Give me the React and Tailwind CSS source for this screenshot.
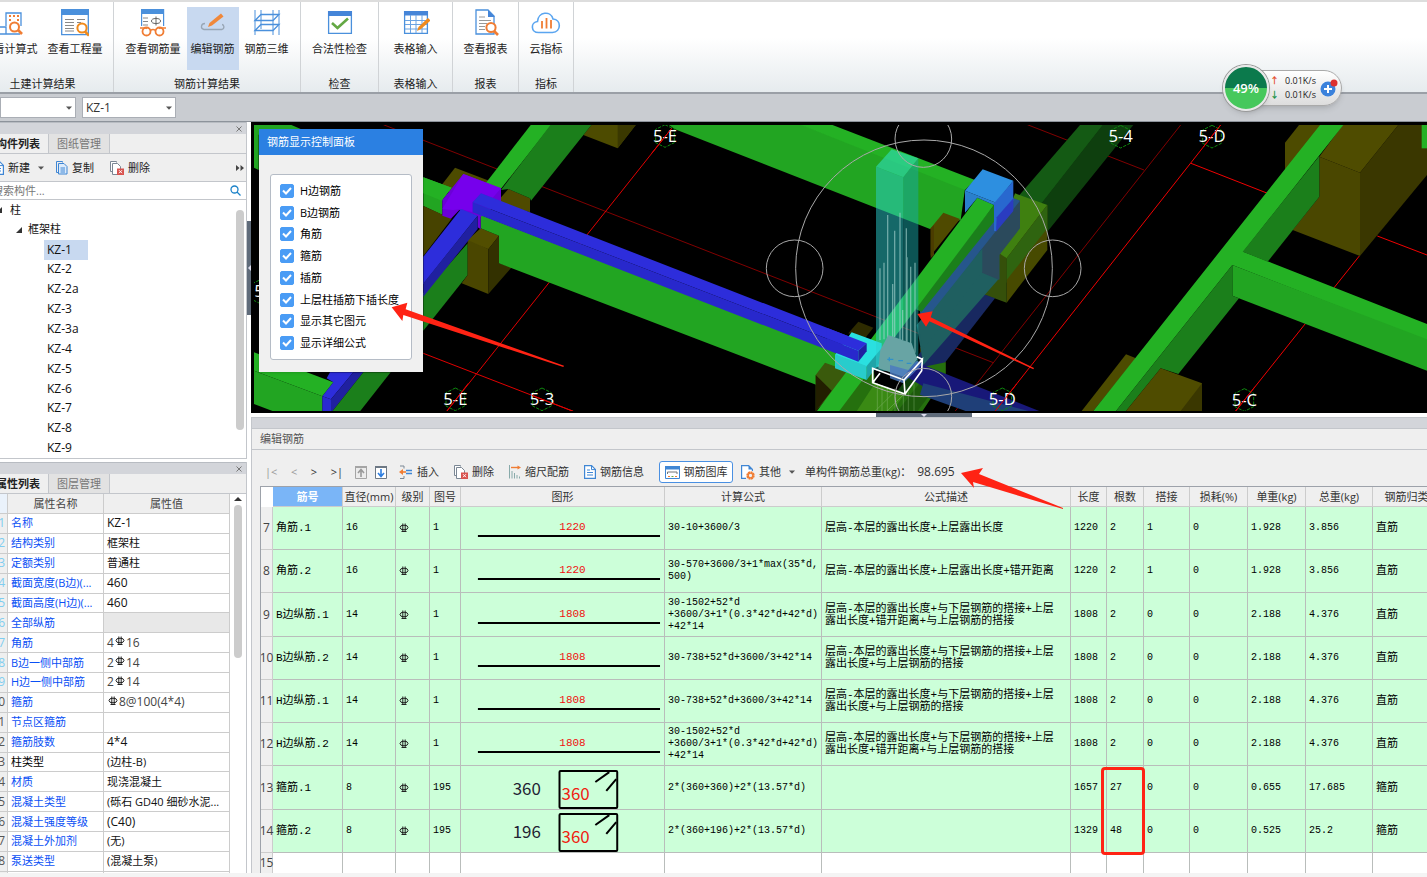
import { useState } from "react";

const TREE = ["KZ-1", "KZ-2", "KZ-2a", "KZ-3", "KZ-3a", "KZ-4", "KZ-5", "KZ-6", "KZ-7", "KZ-8", "KZ-9"];

const PROPS = [
  { name: "名称", value: "KZ-1" },
  { name: "结构类别", value: "框架柱" },
  { name: "定额类别", value: "普通柱" },
  { name: "截面宽度(B边)(...", value: "460" },
  { name: "截面高度(H边)(...", value: "460" },
  { name: "全部纵筋", value: "", disabled: true },
  { name: "角筋", before: "4", rebar: true, value: "16" },
  { name: "B边一侧中部筋", before: "2", rebar: true, value: "14" },
  { name: "H边一侧中部筋", before: "2", rebar: true, value: "14" },
  { name: "箍筋", rebar: true, value: "8@100(4*4)" },
  { name: "节点区箍筋", value: "" },
  { name: "箍筋肢数", value: "4*4" },
  { name: "柱类型", value: "(边柱-B)", plain: true },
  { name: "材质", value: "现浇混凝土" },
  { name: "混凝土类型", value: "(砾石 GD40 细砂水泥..." },
  { name: "混凝土强度等级", value: "(C40)" },
  { name: "混凝土外加剂", value: "(无)" },
  { name: "泵送类型", value: "(混凝土泵)" },
];

const DISPLAY_OPTIONS = ["H边钢筋", "B边钢筋", "角筋", "箍筋", "插筋", "上层柱插筋下插长度", "显示其它图元", "显示详细公式"];

const DESC_A = "层高-本层的露出长度+与下层钢筋的搭接+上层\n露出长度+错开距离+与上层钢筋的搭接";
const DESC_B = "层高-本层的露出长度+与下层钢筋的搭接+上层\n露出长度+与上层钢筋的搭接";
const FORMULA_A = "30-1502+52*d\n+3600/3+1*(0.3*42*d+42*d)\n+42*14";
const FORMULA_B = "30-738+52*d+3600/3+42*14";

const BARS = [
  { no: 7, name: "角筋.1", dia: 16, code: 1, line: "1220", formula: "30-10+3600/3", desc: "层高-本层的露出长度+上层露出长度", rest: ["1220", "2", "1", "0", "1.928", "3.856"], kind: "直筋" },
  { no: 8, name: "角筋.2", dia: 16, code: 1, line: "1220", formula: "30-570+3600/3+1*max(35*d,\n500)", desc: "层高-本层的露出长度+上层露出长度+错开距离", rest: ["1220", "2", "1", "0", "1.928", "3.856"], kind: "直筋" },
  { no: 9, name: "B边纵筋.1", dia: 14, code: 1, line: "1808", formula: FORMULA_A, desc: DESC_A, rest: ["1808", "2", "0", "0", "2.188", "4.376"], kind: "直筋" },
  { no: 10, name: "B边纵筋.2", dia: 14, code: 1, line: "1808", formula: FORMULA_B, desc: DESC_B, rest: ["1808", "2", "0", "0", "2.188", "4.376"], kind: "直筋" },
  { no: 11, name: "H边纵筋.1", dia: 14, code: 1, line: "1808", formula: FORMULA_B, desc: DESC_B, rest: ["1808", "2", "0", "0", "2.188", "4.376"], kind: "直筋" },
  { no: 12, name: "H边纵筋.2", dia: 14, code: 1, line: "1808", formula: FORMULA_A, desc: DESC_A, rest: ["1808", "2", "0", "0", "2.188", "4.376"], kind: "直筋" },
  { no: 13, name: "箍筋.1", dia: 8, code: 195, stirrup: "360", formula: "2*(360+360)+2*(13.57*d)", desc: "", rest: ["1657", "27", "0", "0", "0.655", "17.685"], kind: "箍筋" },
  { no: 14, name: "箍筋.2", dia: 8, code: 195, stirrup: "196", formula: "2*(360+196)+2*(13.57*d)", desc: "", rest: ["1329", "48", "0", "0", "0.525", "25.2"], kind: "箍筋" },
];

const COLUMNS = ["直径(mm)", "级别", "图号", "图形", "计算公式", "公式描述", "长度", "根数", "搭接", "损耗(%)", "单重(kg)", "总重(kg)", "钢筋归类"];

/* ---------- icons ---------- */

const RebarMark = ({ className }) => (
  <svg className={className} width="10" height="10" viewBox="0 0 10 10" fill="none" stroke="#222">
    <ellipse cx="5" cy="4.500" rx="4" ry="2.300" />
    <path d="M3.800 .5v8M6.200 .5v8M2.500 8.500h5" />
  </svg>
);

const Caret = ({ className }) => (
  <svg className={className} width="6" height="4" viewBox="0 0 6 4">
    <path d="M0 .5h6L3 3.8z" fill="#555" />
  </svg>
);

const CalcFormulaIcon = () => (
  <svg width="28" height="28" viewBox="0 0 28 28" fill="none">
    <path d="M10 17V4h15v13M0 18h10v7M0 25h24" stroke="#4a90dc" strokeWidth="1.3" />
    <path d="M13 7h2M17 7h2M21 7h2M13 11h2M21 11h2" stroke="#f07d34" strokeWidth="2" />
    <circle cx="18.500" cy="18" r="4.500" fill="#fff" stroke="#f07d34" strokeWidth="2" />
    <path d="m22 21 4 4" stroke="#f07d34" strokeWidth="2.600" />
  </svg>
);

const QuantityIcon = () => (
  <svg width="28" height="28" viewBox="0 0 28 28" fill="none">
    <path d="M.7.7h26.600v25H.7z" fill="#fff" stroke="#4a90dc" strokeWidth="1.300" />
    <path d="M0 0h28v6H0z" fill="#4a90dc" />
    <path d="M4 10.500h9M4 13.500h9M4 16.500h9M4 19.500h9M4 22h9M16 10.500h8M16 13.500h4" stroke="#888" />
    <circle cx="21" cy="19" r="4.600" fill="#fff" stroke="#f08a1c" strokeWidth="2" />
    <path d="m24 22.500 4 4" stroke="#f08a1c" strokeWidth="2.600" />
  </svg>
);

const RebarQuantityIcon = () => (
  <svg width="28" height="28" viewBox="0 0 28 28" fill="none">
    <path d="M2.600 17V.6h22v16.500" fill="#fff" stroke="#4a90dc" strokeWidth="1.200" />
    <path d="M2 0h23v5H2z" fill="#4a90dc" />
    <path d="M4 9h5M4 12.500h5M4 16h5" stroke="#888" />
    <ellipse cx="17" cy="12" rx="4.500" ry="2.500" stroke="#666" />
    <path d="M17 7.500v9" stroke="#666" />
    <path d="M1 19h6l1 .5M27 19h-6l-1 .5" stroke="#f07d34" strokeWidth="1.500" />
    <circle cx="7.500" cy="22.500" r="4" stroke="#f07d34" strokeWidth="1.800" />
    <circle cx="20.500" cy="22.500" r="4" stroke="#f07d34" strokeWidth="1.800" />
    <path d="M11.500 21.500q2.500-2 5 0" stroke="#f07d34" strokeWidth="1.500" />
  </svg>
);

const EditRebarIcon = () => (
  <svg width="28" height="28" viewBox="0 0 28 28" fill="none">
    <path d="M6 14.500c-4 0-5 5-1 6h18c3-1 2-5 0-5" stroke="#98a6b5" strokeWidth="1.300" />
    <path d="m9 18 1.500-4L22 4.500l2.500 3L13 16.500z" fill="#f0883a" />
  </svg>
);

const Rebar3dIcon = () => (
  <svg width="28" height="28" viewBox="0 0 28 28" fill="none" stroke="#4a90dc">
    <path d="M2 1v25M8 1v19M20 1v25M26 1v25" />
    <path d="M2 11.500h18l6-6H8zM2 21.500h18l6-6H8z" strokeWidth="1.300" />
  </svg>
);

const LegalCheckIcon = () => (
  <svg width="28" height="28" viewBox="0 0 28 28" fill="none">
    <path d="M2.600 2.600h22.800v21.800H2.600z" fill="#fff" stroke="#4a90dc" strokeWidth="1.300" />
    <path d="M2 2h24v5H2z" fill="#4585d8" />
    <path d="m6 14 5.500 5L22 9.500" stroke="#64a844" strokeWidth="2.600" />
  </svg>
);

const TableInputIcon = () => (
  <svg width="28" height="28" viewBox="0 0 28 28" fill="none">
    <path d="M2.600 2.600h22.800v21.800H2.600z" fill="#fff" stroke="#4a90dc" strokeWidth="1.300" />
    <path d="M2 2h24v4.500H2z" fill="#4585d8" />
    <path d="M3 11.500h22M3 15.500h22M3 20h22M8.500 6v18M14 6v18M20 6v18" stroke="#6ba3e2" />
    <path d="m15 22 1.500-4L26 9l2.500 2.500L19 20z" fill="#f08a1c" />
  </svg>
);

const ReportIcon = () => (
  <svg width="28" height="28" viewBox="0 0 28 28" fill="none">
    <path d="M4 1h12l6 6v18H4z" fill="#fff" stroke="#4a90dc" strokeWidth="1.300" />
    <path d="M16 1v7h7z" fill="#4585d8" />
    <path d="M7 8h6M7 11.500h12M7 14.500h8M7 17.500h6M7 20.500h6" stroke="#999" />
    <circle cx="19" cy="18.500" r="4.600" fill="#fff" stroke="#f07d34" strokeWidth="2" />
    <path d="m22 22 4 4" stroke="#f07d34" strokeWidth="2.600" />
  </svg>
);

const CloudIcon = () => (
  <svg width="30" height="28" viewBox="0 0 30 28" fill="none">
    <path d="M7.500 23.500c-8 0-8-10.500-1-11C7 2.500 20 1.500 22 10c8.500.5 8.500 13-.5 13.500z" stroke="#5aa5f0" strokeWidth="1.600" />
    <path d="M11 12v7.500M15.500 9v10.500M20 11v8.500" stroke="#f07d34" strokeWidth="1.800" />
  </svg>
);

const PageIcon = () => (
  <svg width="12" height="14" viewBox="0 0 12 14" fill="none">
    <path d="M.6.600h7l3.800 3.800v9H.6z" fill="#fff" stroke="#3f86d4" strokeWidth="1.200" />
    <path d="M7.500.6v4h4M3 5h3M3 7.500h6M3 10h6" stroke="#3f86d4" />
  </svg>
);

const CopyIcon = () => (
  <svg width="12" height="14" viewBox="0 0 12 14" fill="none" stroke="#3f86d4">
    <path d="M2.500 11.500h-2V.5h6v1" />
    <path d="M2.500 2.500h5.500l3 3v7.500h-8.500z" fill="#dcebfb" />
    <path d="M4.500 7h4.500M4.500 9h4.500M4.500 11h4.500" />
  </svg>
);

const DeleteIcon = () => (
  <svg width="14" height="14" viewBox="0 0 14 14" fill="none">
    <path d="M2.500 10.500h-2V.5h6v1M2.500 2.500h5l3 3v8h-8z" fill="#fff" stroke="#7b8794" />
    <path d="M7 7.500h7v6.500H7z" fill="#d9534f" />
    <path d="m9 9.200 3 3M12 9.200l-3 3" stroke="#fff" />
  </svg>
);

const InsertIcon = () => (
  <svg width="14" height="14" viewBox="0 0 14 14" fill="none">
    <path d="M1 1h4v2.500M1 13.500h4V11" stroke="#7b8794" />
    <path d="M7 5.500h6M7 8.500h6" stroke="#3f86d4" strokeWidth="1.400" />
    <path d="M7 7H2" stroke="#f07d34" strokeWidth="1.600" />
    <path d="M0 7l4-3v6z" fill="#f07d34" />
  </svg>
);

const ScaleIcon = () => (
  <svg width="12" height="14" viewBox="0 0 12 14" fill="none">
    <path d="M.5 0v13.500M3 6v7.500M5.500 8v5.500M8 10v3.500M10.500 11.500v2" stroke="#8aa" />
    <path d="M2 2.500h8" stroke="#f07d34" strokeWidth="1.400" />
    <path d="M8.500 .5l3.500 2-3.500 2z" fill="#f07d34" />
  </svg>
);

const LibraryIcon = () => (
  <svg width="15" height="13" viewBox="0 0 15 13" fill="none">
    <path d="M.5.500h14v12H.5z" fill="#fff" stroke="#3f86d4" />
    <path d="M0 0h15v3.500H0z" fill="#3f86d4" />
    <path d="M2.500 8V6h9.500v2" stroke="#777" />
    <path d="M3 10.500h2M10 10.500h2" stroke="#f07d34" />
    <path d="M6.500 10.500h2" stroke="#64a844" />
  </svg>
);

const OtherIcon = () => (
  <svg width="14" height="15" viewBox="0 0 14 15" fill="none">
    <path d="M5 13.400H.6V.6h7l3.800 3.800V6" fill="#fff" stroke="#3f86d4" strokeWidth="1.200" />
    <path d="M7.500 0v4.500H12z" fill="#3f86d4" />
    <circle cx="9.500" cy="10.500" r="3" stroke="#f07d34" strokeWidth="2.400" strokeDasharray="1.800 .5" />
    <circle cx="9.500" cy="10.500" r="2.400" stroke="#f07d34" strokeWidth="1.400" />
  </svg>
);

const BoxArrowIcon = ({ down }) => (
  <svg width="12" height="13" viewBox="0 0 12 13" fill="none">
    <path d="M.5.500h11v12H.5z" fill={down ? "#fff" : "#ececec"} stroke={down ? "#6d7884" : "#a5a5a5"} />
    <path d="M0 0h12v2H0z" fill={down ? "#6d7884" : "#a5a5a5"} />
    <path d={down ? "M6 3v7M3 7l3 3.500L9 7" : "M6 11V4M3 7l3-3.500L9 7"} stroke={down ? "#2b7de0" : "#999"} strokeWidth="1.600" />
  </svg>
);

/* ---------- ribbon ---------- */

const RibbonButton = ({ icon, label, active }) => (
  <button
    type="button"
    className={`flex h-[63px] shrink-0 flex-col items-center gap-1 px-1 pt-[2px] whitespace-nowrap ${active ? "bg-[#c8d9f0]" : ""}`}
  >
    <span className="flex h-7 items-center">{icon}</span>
    <span className="leading-4">{label}</span>
  </button>
);

const RibbonGroup = ({ title, className, children }) => (
  <div className={`flex shrink-0 flex-col border-r border-[#d0d3d6] pt-[7px] ${className}`}>
    <div className="flex justify-center gap-[2px]">{children}</div>
    <div className="mt-[6px] text-center leading-4">{title}</div>
  </div>
);

const Ribbon = () => (
  <header className="flex h-[94px] shrink-0 overflow-hidden border-t-2 border-b-2 border-t-[#dddddd] border-b-[#9a9fa6] bg-gradient-to-b from-white from-40% to-[#e6ebee]">
    <div className="-mt-[2px] flex">
      <RibbonGroup title="土建计算结果" className="-ml-[28px] w-[142px]">
        <RibbonButton icon={<CalcFormulaIcon />} label="查看计算式" />
        <RibbonButton icon={<QuantityIcon />} label="查看工程量" />
      </RibbonGroup>
      <RibbonGroup title="钢筋计算结果" className="w-[187px]">
        <RibbonButton icon={<RebarQuantityIcon />} label="查看钢筋量" />
        <RibbonButton icon={<EditRebarIcon />} label="编辑钢筋" active />
        <RibbonButton icon={<Rebar3dIcon />} label="钢筋三维" />
      </RibbonGroup>
      <RibbonGroup title="检查" className="w-[78px]">
        <RibbonButton icon={<LegalCheckIcon />} label="合法性检查" />
      </RibbonGroup>
      <RibbonGroup title="表格输入" className="w-[74px]">
        <RibbonButton icon={<TableInputIcon />} label="表格输入" />
      </RibbonGroup>
      <RibbonGroup title="报表" className="w-[66px]">
        <RibbonButton icon={<ReportIcon />} label="查看报表" />
      </RibbonGroup>
      <RibbonGroup title="指标" className="w-[55px]">
        <RibbonButton icon={<CloudIcon />} label="云指标" />
      </RibbonGroup>
    </div>
  </header>
);

const SpeedBall = () => (
  <div className="absolute top-[65px] right-[85px] z-20 flex items-center">
    <div className="z-10 -mr-6 grid size-[46px] place-items-center rounded-full border-2 border-[#e8e8e8] bg-gradient-to-b from-[#0b7a4c] from-50% to-[#46c85c] to-50% text-[13px] font-semibold text-white shadow-md ring-1 ring-[#999]">
      49%
    </div>
    <div className="flex h-9 w-[97px] items-center rounded-r-full border border-[#aaa] bg-gradient-to-b from-white to-[#dddddd] pl-6 shadow-md">
      <div className="text-[9px] leading-[14px] whitespace-nowrap text-[#222]">
        <div className="flex gap-[6px]"><span className="font-bold text-[#e4502e]">↑</span>0.01K/s</div>
        <div className="flex gap-[6px]"><span className="font-bold text-[#1b9448]">↓</span>0.01K/s</div>
      </div>
      <svg className="ml-1 shrink-0" width="18" height="18" viewBox="0 0 18 18">
        <circle cx="8" cy="10" r="7.500" fill="#3b82dc" />
        <path d="M8 6v8M4 10h8" stroke="#fff" strokeWidth="2" />
        <circle cx="14" cy="4" r="3.500" fill="#dc3030" />
      </svg>
    </div>
  </div>
);

/* ---------- left side ---------- */

const PanelTabs = ({ active, other }) => (
  <>
    <div className="flex h-3 shrink-0 items-center justify-end border-t border-[#b8bcc2] bg-[#d3d5da]">
      <button type="button" aria-label="关闭" className="p-1">
        <svg width="6" height="6" viewBox="0 0 6 6" stroke="#777"><path d="m.5.500 5 5M5.500.500l-5 5" /></svg>
      </button>
    </div>
    <div className="flex h-5 shrink-0 border-b border-[#c3c6cb] bg-[#efefef] leading-5">
      <button type="button" className="w-[61px] border-r border-[#c3c6cb] font-bold text-[#222]">{active}</button>
      <button type="button" className="w-[61px] border-r border-[#c3c6cb] bg-[#e2e2e2] text-[#777]">{other}</button>
    </div>
  </>
);

const ComponentPanel = () => (
  <section className="flex h-[337px] shrink-0 flex-col border-r border-b border-[#c3c6cb] bg-white">
    <PanelTabs active="构件列表" other="图纸管理" />
    <div className="flex h-7 shrink-0 items-center border-b border-[#c3c6cb] bg-[#efefef] pl-1">
      <button type="button" className="flex items-center gap-1"><PageIcon />新建</button>
      <Caret className="ml-2" />
      <button type="button" className="ml-3 flex items-center gap-1"><CopyIcon />复制</button>
      <button type="button" className="ml-4 flex items-center gap-1"><DeleteIcon />删除</button>
      <svg className="mr-[2px] ml-auto" width="8" height="6" viewBox="0 0 8 6"><path d="M0 0l3.500 3L0 6zM4.500 0L8 3 4.500 6z" fill="#444" /></svg>
    </div>
    <div className="flex h-[18px] shrink-0 items-center border-b border-[#c3c6cb] pr-[5px] pl-1">
      <input aria-label="搜索构件" placeholder="搜索构件..." className="min-w-0 flex-1 leading-4 outline-none placeholder:text-[#777]" />
      <svg width="11" height="11" viewBox="0 0 11 11" fill="none" stroke="#1b82c8" strokeWidth="1.300">
        <circle cx="4.500" cy="4.500" r="3.500" /><path d="m7 7 3.500 3.500" />
      </svg>
    </div>
    <div className="flex min-h-0 flex-1">
      <ul className="flex flex-1 flex-col text-xs text-[#111]">
        <li className="flex flex-1 items-center gap-2 pl-2 text-[11px]"><TreeMark />柱</li>
        <li className="flex flex-1 items-center gap-[6px] pl-7 text-[11px]"><TreeMark />框架柱</li>
        {TREE.map((name, i) => (
          <li key={name} className="flex flex-1 pl-14">
            <span className={`flex w-11 items-center pl-[3px] ${i === 0 ? "bg-[#c8d9f0]" : ""}`}>{name}</span>
          </li>
        ))}
      </ul>
      <div className="mt-[10px] mr-[2px] h-[220px] w-2 rounded-full bg-[#cccccc]" />
    </div>
  </section>
);

const TreeMark = () => (
  <svg width="6" height="6" viewBox="0 0 6 6"><path d="M6 0v6H0z" fill="#333" /></svg>
);

// latin-only values are set one step larger than the Chinese ones
const isLatin = (text) => /^[\x20-\x7e]+$/.test(text);

const PropertyPanel = () => (
  <section className="mt-[3px] flex min-h-0 flex-1 flex-col border-r border-[#c3c6cb] bg-white">
    <PanelTabs active="属性列表" other="图层管理" />
    <div className="flex min-h-0 flex-1 overflow-hidden">
      <table className="h-full min-w-0 flex-1 table-fixed border-separate border-spacing-0">
        <colgroup>
          <col className="w-5" />
          <col className="w-24" />
          <col />
        </colgroup>
        <thead>
          <tr className="h-5 bg-[#efefef] text-[#444]">
            <th className="border-r border-b border-[#ccc] bg-[#eaf2fb]" />
            <th className="border-r border-b border-[#ccc] py-0 leading-4 font-normal">属性名称</th>
            <th className="border-r border-b border-[#ccc] py-0 leading-4 font-normal">属性值</th>
          </tr>
        </thead>
        <tbody>
          {PROPS.map((p, i) => (
            <tr key={p.name} className="h-[19px]">
              <td className={`border-r border-b border-[#ccc] bg-[#efefef] p-0 pr-[2px] text-right text-xs leading-4 ${i < 9 ? "text-[#7fcdf0]" : "text-[#555]"}`}>{i + 1}</td>
              <td className={`truncate border-r border-b border-[#ccc] p-0 pl-[3px] leading-4 ${p.plain ? "text-black" : "text-[#0a50f5]"}`}>{p.name}</td>
              <td className={`truncate border-r border-b border-[#ccc] p-0 pl-[3px] leading-4 ${isLatin(p.value) ? "text-xs" : "text-[11px]"} ${p.disabled ? "bg-[#e8e8e8]" : ""} ${p.rebar ? "text-[#444]" : "text-[#111]"}`}>
                {p.before}
                {p.rebar && <RebarMark className="mx-px mb-1 inline-block" />}
                {p.value}
              </td>
            </tr>
          ))}
          <tr className="h-px">
            <td className="border-r border-[#ccc] bg-[#efefef] p-0" />
            <td className="border-r border-[#ccc] p-0" />
            <td className="border-r border-[#ccc] p-0" />
          </tr>
        </tbody>
      </table>
      <div className="flex w-4 flex-col items-center gap-1 pt-[3px]">
        <svg width="8" height="4" viewBox="0 0 8 4"><path d="M4 0l4 4H0z" fill="#333" /></svg>
        <div className="h-[153px] w-2 rounded-full bg-[#cccccc]" />
      </div>
    </div>
  </section>
);

/* ---------- 3d view ---------- */

const AxisLabel = ({ x, y, children }) => (
  <g>
    <path d={`M${x} ${y - 34}l28 14v40l-28 14l-28 -14v-40z`} fill="none" stroke="#0f8a0f" strokeWidth="3" strokeDasharray="10 4" />
    <text x={x} y={y + 17} textAnchor="middle" fontSize="50" fill="#fff">{children}</text>
  </g>
);

const Scene = () => (
  <svg className="absolute inset-0 size-full" viewBox="0 0 3528 873" preserveAspectRatio="xMinYMin slice">
    <defs>
      <clipPath id="scene"><rect x="9" y="9" width="3519" height="858" /></clipPath>
    </defs>
    <g clipPath="url(#scene)">
      {/* west bay */}
      <g transform="translate(-18 -6)">
        <path d="M415 14 2245 728" stroke="#800000" strokeWidth="3" />
        <path d="M1280 25 605 874M535 700l450 174" stroke="#e00000" strokeWidth="3" />
        <path d="M1015 45l25-31h133l-55 71z" fill="#4d4b00" />
        <path d="M1118 14h55l-55 71z" fill="#3a3800" />
        <path d="M590 195l40-52 110 42-80 75z" fill="#4d4b00" />
        <path d="M790 207l65 28v42l-100-30z" fill="#4f4a00" />
        <path d="M858 14h62L765 210l-42-22z" fill="#24b124" />
        <path d="M917 14h123L858 242l-3-7-65-28-22 3z" fill="#1b7f1b" />
        <path d="M535 172l85 31-28 37v45l28 13-85-40z" fill="#22a522" />
        <path d="M535 172l85 31-28 37v3l-57-23z" fill="#24b124" />
        <path d="M535 258l85 38-85 112z" fill="#474300" />
        <path d="M668 370v95L535 632V520z" fill="#1b7f1b" />
        <path d="M668 355l62 33v134l-80-32 18-25z" fill="#4a4600" />
        <path d="M707 325l55 22-32 41-62-28z" fill="#524e00" />
        <path d="M730 388l32-41v83l38 12-70 80z" fill="#333100" />
        <path d="M707 285l1078 415 0 105-25 7L762 430v-83l-55-22z" fill="#22a522" />
        <path d="M655 162l113 43v40l-61 45v38l-9-6v-33l-55-19-25 26-26-9v-47z" fill="#6b00d8" />
        <path d="M655 162l113 43-25 28-35-13-25 27v30l-35-10-24 3-32-3z" fill="#7600ec" />
        <path d="M648 267l50 20-163 205v-82z" fill="#2d2ddb" />
        <path d="M698 287v40L535 530v-40z" fill="#2020a0" />
        <path d="M708 220l1157 450-25 22L683 247z" fill="#2d2ddb" />
        <path d="M683 247l1157 445v34L683 277z" fill="#2828cc" />
        <path d="M27 14h110l70 30H41v106l-14-7z" fill="#22a522" />
        <path d="M27 697l238 90-33 42-205-77z" fill="#24b124" />
        <path d="M27 752l205 77v45H85l-58-22z" fill="#22a522" />
        <path d="M255 757h70l-67 81-26-9 33-42-20-12z" fill="#2d2ddb" />
        <path d="M232 829l26 9v36h-26z" fill="#2a2ad0" />
        <path d="M325 757h30l-93 117h-4v-36z" fill="#2020a0" />
        <path d="M355 757h82l-92 117h-83z" fill="#1b7f1b" />
        <AxisLabel x={631} y={838}>5-E</AxisLabel>
        <AxisLabel x={891} y={838}>5-3</AxisLabel>
        <AxisLabel x={42} y={515}>5</AxisLabel>
        <path d="M670 790l-65 84M860 826l125 48" stroke="#e00000" strokeWidth="3" />
      </g>

      {/* middle bay */}
      <g transform="translate(1167 -6)">
        <path d="M1622 15 945 874M1162 14l350 136" stroke="#800000" strokeWidth="3" />
        <path d="M1742 15 1065 874" stroke="#f00000" strokeWidth="3" />
        <path d="M1320 15h70L1205 252l-75-17z" fill="#145a14" />
        <path d="M1388 15h92L1222 335 850 800l-50 74-60-20 465-605z" fill="#0e3f0e" />
        <path d="M1125 220l97 35-122 160-40-15z" fill="#3f8010" />
        <path d="M1100 415l122-160v135L1100 548z" fill="#474a00" />
        <path d="M1100 415l122-160v70L1100 480z" fill="#2f6410" />
        <path d="M1010 515l68-115 22 15v133z" fill="#35500a" />
        <path d="M85 14h400l490 192-13 94-92 27L105 28z" fill="#22a522" />
        <path d="M480 14h95l430 166-30 30z" fill="#24b124" />
        <path d="M910 278l50 19-88 110v-82z" fill="#4f4a00" />
        <path d="M872 325l10-10v90l-10 10z" fill="#4a3c00" />
        <path d="M655 605l45 18-25 32-50-15z" fill="#2e2b00" />
        <path d="M840 680l77 27v55l-80-20z" fill="#33330a" />
        <path d="M990 508l75 27-210 270-20-100z" fill="#182860" />
        <path d="M1027 385l51 15v75L850 735l-20-120z" fill="#1f5f60" />
        <path d="M1068 320l52-85 20 7v83l-62 80v75l-52-22v-73l-181 230-10-80z" fill="#2b4a5c" />
        <path d="M1027 385v70L848 690l-13-80z" fill="#1f5f60" />
        <path d="M1062 300l58-65 20 7L848 610l-13-60z" fill="#26568c" />
        <path d="M1062 255v50L845 575l-25-10z" fill="#1b7f1b" />
        <path d="M555 728l60 22 25-10-65 80-48 54V765z" fill="#3a5a0c" />
        <path d="M527 765l48 47-48 62z" fill="#221f00" />
        <path d="M590 874l110-140 5 55 90 33 50-80 72-15v40l-70 107z" fill="#25700e" />
        <path d="M650 874l55-85 90 33-40 52z" fill="#3a8a14" />
        <path d="M870 750l47 12-85 112h-60z" fill="#1d5a0c" />
        <path d="M1012 233l50 22-465 619h-67z" fill="#24b124" />
        <path d="M975 212l93 36-6 7-50-22-37 45z" fill="#2a80cc" />
        <path d="M1028 148l92 34-52 66-93-36z" fill="#2d8fe0" />
        <path d="M1062 250l58-68v60l-52 92-6-2z" fill="#2868cf" />
        <path d="M1070 292l50-57v38l-52 62z" fill="#2a3cc0" />
        <path d="M825 725l375 149h-220L790 765z" fill="#181878" />
        <path d="M850 790l320 84H980l-140-50z" fill="#1f3f78" />
        <path d="M635 637l90 33v70l-45 0-95-35z" fill="#2ae0e0" />
        <path d="M585 703l95 35v42l-95-35z" fill="#28cccc" />
        <path d="M680 738l42-50v37l-42 55z" fill="#1fa4a8" />
        <path d="M560 623l120 47-25 22-95-37z" fill="#2d2ddb" />
        <path d="M560 655l95 37v33l-95-37z" fill="#2828cc" />
        <path d="M655 692l25-22v24l-25 31z" fill="#2020a0" />
        {/* selected column */}
        <path d="M755 88l80 27-45 57-82-32z" fill="#30e0c0" opacity=".6" />
        <path d="M708 140l82 32v580h-82z" fill="#2ad0d0" opacity=".5" />
        <path d="M790 172l45-57v610l-45 40z" fill="#18a8a8" opacity=".5" />
        <path d="M720 445v215M732 428v230M743 285v370M758 492v160M764 332v320M780 278v390M788 570v90M799 325v350M801 412v260M812 440v240M825 428v270" stroke="#a8d4d0" strokeWidth="4" opacity=".6" />
        <path d="M745 645l70 25 17 48-42 52-75-25 6-55z" fill="#68a4a4" />
        <path d="M750 735l55 15 25-28 20 8-60 60-40-15z" fill="#4a78c0" opacity=".8" />
        <path d="M712 790v84M726 795v79M742 800v74M765 805v69M790 820v54M805 815v59M822 790v84M705 874l60-60M740 874l80-80" stroke="#a0c890" strokeWidth="2" opacity=".5" />
        <path d="M698 745l94 35 3 42-97-34zM792 780l55-62-2 34-50 70M830 710l17 8M698 788l22-28" fill="none" stroke="#fff" strokeWidth="5" />
        <path d="M742 718h18M748 712v12M775 722h14M800 730h14" stroke="#3090c8" strokeWidth="4" />
        {/* orbit gizmo */}
        <g fill="none" stroke="#a9a9a9" strokeWidth="3">
          <circle cx="852" cy="445" r="385" />
          <circle cx="850" cy="57" r="85" />
          <circle cx="464" cy="445" r="85" />
          <circle cx="850" cy="830" r="85" />
          <circle cx="1238" cy="445" r="85" />
        </g>
        <AxisLabel x={75} y={48}>5-E</AxisLabel>
        <AxisLabel x={1087} y={838}>5-D</AxisLabel>
        <path d="M95 25 35 100M1130 792l-65 82" stroke="#e00000" strokeWidth="3" />
      </g>

      {/* east bay */}
      <g transform="translate(2337 -216)">
        <path d="M483 340l240 94M1042 558l149 57M988 618 617 1083" stroke="#f00000" strokeWidth="3" />
        <path d="M765 278l42-53h68L765 365z" fill="#4d4b00" />
        <path d="M938 225h167L990 368l-122-48z" fill="#4f4c00" />
        <path d="M868 320l122 48v250l-202-78 80-100z" fill="#4a4700" />
        <path d="M990 368l115-143h86v150L990 618z" fill="#3a3700" />
        <path d="M288 913l30 12-128 158h-35z" fill="#4d4b00" />
        <path d="M870 225h70L640 605l551 217v50L607 645 258 1083h-68z" fill="#24b124" />
        <path d="M868 318v122L713 635l-75-30z" fill="#1b7f1b" />
        <path d="M607 645l584 223v94L607 737z" fill="#22a522" />
        <path d="M607 645v92l20 8-182 227-53-17-104 128h-30z" fill="#1b7f1b" />
        <path d="M392 955l124 45v83H288z" fill="#4f4c00" />
        <path d="M516 1000v83h-64z" fill="#3a3700" />
        <path d="M1175 225h16v70h-16z" fill="#24b124" />
        <AxisLabel x={272} y={260}>5-4</AxisLabel>
        <AxisLabel x={546} y={260}>5-D</AxisLabel>
        <AxisLabel x={643} y={1050}>5-C</AxisLabel>
        <path d="M572 225l-52 66M675 1010l-58 73" stroke="#e00000" strokeWidth="3" />
      </g>
    </g>
  </svg>
);

const SceneArrows = () => (
  <svg className="pointer-events-none absolute inset-0 size-full" viewBox="0 0 3528 873" preserveAspectRatio="xMinYMin slice" fill="#ff2314">
    <path d="M422 556l47-14-5 20 475 169-2 4-480-156-3 18z" />
    <path d="M1999 576l46-8-6 18 310 152-2 4-312-144-10 16z" />
  </svg>
);

const DisplayDialog = () => {
  const [checked, setChecked] = useState(DISPLAY_OPTIONS);

  const toggle = (name) => {
    setChecked(checked.includes(name) ? checked.filter((n) => n !== name) : [...checked, name]);
  };

  return (
    <div className="absolute top-[7px] left-2 w-[164px] bg-[#f0f0f0] shadow">
      <h2 className="bg-[#2b80e2] pl-2 leading-[26px] text-white">钢筋显示控制面板</h2>
      <div className="mx-[11px] mt-[19px] mb-3 flex h-[186px] flex-col justify-between rounded-[3px] border border-[#b5bcc6] bg-white py-2 pl-[9px]">
        {DISPLAY_OPTIONS.map((name) => (
          <label key={name} className="flex h-4 items-center gap-[6px] whitespace-nowrap text-black">
            <span className="grid size-[14px] place-items-center">
              <input
                type="checkbox"
                checked={checked.includes(name)}
                onChange={() => toggle(name)}
                className="col-start-1 row-start-1 size-[14px] appearance-none rounded-[2px] border border-[#4a9cf5] checked:bg-[#4a9cf5]"
              />
              <svg className="pointer-events-none col-start-1 row-start-1" width="10" height="8" viewBox="0 0 10 8" fill="none" stroke="#fff" strokeWidth="2">
                <path d="m1 3.500 3 3L9 1" />
              </svg>
            </span>
            {name}
          </label>
        ))}
      </div>
    </div>
  );
};

/* ---------- rebar editor ---------- */

const StraightBar = ({ length }) => (
  <svg className="block h-[42px] w-full" viewBox="0 0 204 42">
    <text x="112" y="23" textAnchor="middle" fontSize="11" fill="#f01010">{length}</text>
    <path d="M17 29h183" stroke="#000" strokeWidth="2" />
  </svg>
);

const Stirrup = ({ side }) => (
  <svg className="block h-[42px] w-full" viewBox="0 0 204 42" fill="none" stroke="#000" strokeWidth="2" fontFamily="Noto Sans CJK SC, sans-serif">
    <rect x="99" y="4" width="58" height="37" rx="1" />
    <path d="M135 15l14-10M146 24l10-12" />
    <text x="52" y="28" fontSize="17" fill="#223" stroke="none">{side}</text>
    <text x="101" y="33" fontSize="17" fill="#f02010" stroke="none">360</text>
  </svg>
);

const ToolButton = ({ icon, children }) => (
  <button type="button" className="flex items-center gap-1 whitespace-nowrap">{icon}{children}</button>
);

const CELL = "border-r border-b border-[#b9bdbb] p-0 pl-[3px]";
const NUM = "border-r border-b border-[#b9bdbb] p-0 pl-[3px] text-[10px]";

const RebarTable = () => (
  <div className="relative ml-2 min-h-0 flex-1 overflow-hidden border-t border-l border-[#9da2aa] bg-white">
    <table className="h-full w-full min-w-[1180px] table-fixed border-separate border-spacing-0">
      <colgroup>
        <col className="w-3" />
        <col className="w-[70px]" />
        <col className="w-[53px]" />
        <col className="w-[34px]" />
        <col className="w-[31px]" />
        <col className="w-[204px]" />
        <col className="w-[157px]" />
        <col />
        <col className="w-9" />
        <col className="w-[37px]" />
        <col className="w-[46px]" />
        <col className="w-[58px]" />
        <col className="w-[58px]" />
        <col className="w-[67px]" />
        <col className="w-[68px]" />
      </colgroup>
      <thead>
        <tr className="h-5 bg-[#efefef] text-[#333]">
          <th className="bg-white p-0" />
          <th className="border-r border-b border-[#ccc] bg-[#7ab5f7] p-0 leading-4 text-white">筋号</th>
          {COLUMNS.map((c) => (
            <th key={c} className="border-r border-b border-[#ccc] p-0 leading-4 font-normal whitespace-nowrap">{c}</th>
          ))}
        </tr>
      </thead>
      <tbody className="font-['Liberation_Mono','Noto_Sans_CJK_SC',monospace] leading-3 text-black">
        {BARS.map((bar) => (
          <tr key={bar.no} className="h-[43px] bg-[#ccffd9]">
            <th className="border-r border-b border-[#ccc] bg-[#efefef] p-0 text-center font-['Open_Sans',sans-serif] text-xs font-normal text-[#444]">
              <span className="-mx-1">{bar.no}</span>
            </th>
            <td className={CELL}>{bar.name}</td>
            <td className={NUM}>{bar.dia}</td>
            <td className={CELL}><RebarMark /></td>
            <td className={NUM}>{bar.code}</td>
            <td className="border-r border-b border-[#b9bdbb] p-0">
              {bar.line ? <StraightBar length={bar.line} /> : <Stirrup side={bar.stirrup} />}
            </td>
            <td className={`${NUM} whitespace-pre`}>{bar.formula}</td>
            <td className={`${CELL} whitespace-pre`}>{bar.desc}</td>
            {bar.rest.map((v, i) => (
              <td key={i} className={NUM}>{v}</td>
            ))}
            <td className={CELL}>{bar.kind}</td>
          </tr>
        ))}
        <tr className="h-5">
          <th className="border-r border-[#ccc] bg-[#efefef] p-0 text-center font-['Open_Sans',sans-serif] text-xs font-normal text-[#444]">
            <span className="-mx-1">15</span>
          </th>
          {["筋号", ...COLUMNS].map((c) => (
            <td key={c} className="border-r border-[#b9bdbb] p-0" />
          ))}
        </tr>
      </tbody>
    </table>
    <div className="pointer-events-none absolute right-[282px] bottom-[18px] h-[88px] w-11 rounded-[4px] border-3 border-[#ff2314]" />
  </div>
);

const RebarEditor = () => (
  <section className="flex min-h-0 flex-1 flex-col border-l border-[#c3c6cb] bg-[#efefef]">
    <div className="h-3 shrink-0 border-y border-[#c3c6cb] bg-[#d3d5da]" />
    <h2 className="h-[21px] shrink-0 border-b border-[#c3c6cb] pl-2 leading-5 text-[#555]">编辑钢筋</h2>
    <div className="relative flex h-9 shrink-0 items-center pt-2 pl-[13px] text-[#333]">
      <div className="flex w-[78px] items-center justify-between">
        <button type="button" className="text-[#999]">|&lt;</button>
        <button type="button" className="text-[#999]">&lt;</button>
        <button type="button">&gt;</button>
        <button type="button">&gt;|</button>
      </div>
      <div className="mr-3 ml-3 flex gap-2">
        <button type="button" aria-label="上移"><BoxArrowIcon /></button>
        <button type="button" aria-label="下移"><BoxArrowIcon down /></button>
      </div>
      <div className="flex items-center gap-[15px]">
        <ToolButton icon={<InsertIcon />}>插入</ToolButton>
        <ToolButton icon={<DeleteIcon />}>删除</ToolButton>
        <ToolButton icon={<ScaleIcon />}>缩尺配筋</ToolButton>
        <ToolButton icon={<PageIcon />}>钢筋信息</ToolButton>
        <button type="button" className="flex h-[22px] w-[74px] items-center justify-center gap-1 rounded-[3px] border border-[#4a90e2] bg-white whitespace-nowrap">
          <LibraryIcon />钢筋图库
        </button>
      </div>
      <button type="button" className="ml-2 flex items-center gap-1 whitespace-nowrap">
        <OtherIcon />其他<Caret className="ml-1" />
      </button>
      <div className="relative ml-[10px] flex items-center gap-[6px] whitespace-nowrap">
        <span>单构件钢筋总重(kg)：</span>
        <span className="text-xs">98.695</span>
        <svg className="pointer-events-none absolute top-1 left-full z-10 ml-[6px]" width="104" height="42" viewBox="0 0 104 42" fill="#ff2314">
          <path d="M0 5l22-5-4 6 84 34v1L12 14l1 6z" />
        </svg>
      </div>
    </div>
    <RebarTable />
  </section>
);

export default function App() {
  return (
    <div className="relative flex h-screen min-h-[720px] flex-col overflow-hidden bg-white font-['Open_Sans','Noto_Sans_CJK_SC',sans-serif] text-[11px] leading-4 text-[#222]">
      <Ribbon />
      <SpeedBall />
      <div className="flex h-7 shrink-0 items-center gap-[6px] border-b border-[#8d939b] bg-[#c9ccd1]">
        {[
          { label: "楼层", value: "", width: "w-[76px]" },
          { label: "构件", value: "KZ-1", width: "w-[94px]" },
        ].map((s) => (
          <div key={s.label} className={`relative ${s.width}`}>
            <select aria-label={s.label} className="h-[21px] w-full appearance-none border border-[#aaaeb5] bg-white pl-[3px] text-xs text-[#333]">
              <option>{s.value}</option>
            </select>
            <Caret className="pointer-events-none absolute top-[9px] right-1" />
          </div>
        ))}
      </div>
      <div className="flex min-h-0 flex-1">
        <aside className="-ml-3 flex w-[259px] shrink-0 flex-col">
          <ComponentPanel />
          <PropertyPanel />
        </aside>
        <div className="w-1 shrink-0 pt-[99px]">
          <div className="grid h-[94px] place-items-center bg-[#5f6b7a]">
            <svg width="3" height="6" viewBox="0 0 3 6"><path d="M3 0v6L0 3z" fill="#dde" /></svg>
          </div>
        </div>
        <main className="flex min-w-0 flex-1 flex-col">
          <div className="relative h-[291px] shrink-0 overflow-hidden bg-black">
            <Scene />
            <DisplayDialog />
            <SceneArrows />
          </div>
          <div className="flex h-1 shrink-0 justify-center pl-[170px]">
            <div className="grid w-24 place-items-center bg-[#5f6b7a]">
              <svg width="6" height="3" viewBox="0 0 6 3"><path d="M0 0h6L3 3z" fill="#dde" /></svg>
            </div>
          </div>
          <RebarEditor />
        </main>
      </div>
      <div className="h-1 shrink-0 bg-[#f4f4f4]" />
    </div>
  );
}
